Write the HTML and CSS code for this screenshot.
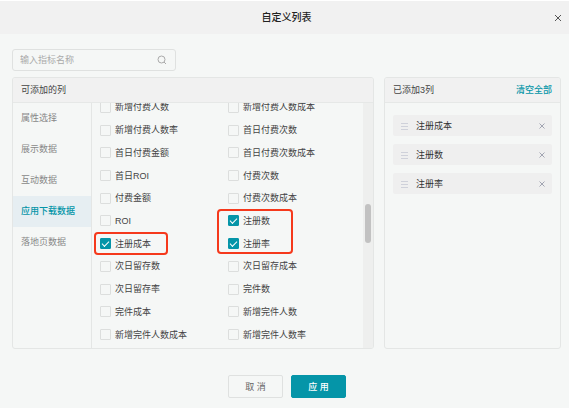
FILE: index.html
```html
<!DOCTYPE html>
<html lang="zh-CN">
<head>
  <meta charset="UTF-8" />
  <meta name="viewport" content="width=device-width, initial-scale=1.0" />
  <title>自定义列表</title>
  <link rel="stylesheet" href="styles.css">
</head>
<body>
  <div class="dialog">
    <header class="dialog-header">
      <h1>自定义列表</h1>
      <button type="button" class="close" aria-label="关闭">
        <svg viewBox="0 0 8 8" width="8" height="8"><path d="M1 1l6 6M7 1L1 7" /></svg>
      </button>
    </header>

    <main class="dialog-body">
      <div class="search">
        <input type="text" placeholder="输入指标名称" aria-label="输入指标名称">
        <svg viewBox="0 0 10 10" width="10" height="10"><circle cx="4.5" cy="4.5" r="3.5" /><path d="M7 7l2 2" /></svg>
      </div>

      <div class="panels">
        <section class="panel available">
          <h2 class="panel-title">可添加的列</h2>
          <div class="panel-content">
            <nav class="groups">
              <a href="#">属性选择</a>
              <a href="#">展示数据</a>
              <a href="#">互动数据</a>
              <a href="#" class="active">应用下载数据</a>
              <a href="#">落地页数据</a>
            </nav>

            <div class="list-view">
              <div class="list">
                <label><input type="checkbox">新增付费人数</label>
                <label><input type="checkbox">新增付费人数成本</label>
                <label><input type="checkbox">新增付费人数率</label>
                <label><input type="checkbox">首日付费次数</label>
                <label><input type="checkbox">首日付费金额</label>
                <label><input type="checkbox">首日付费次数成本</label>
                <label><input type="checkbox">首日ROI</label>
                <label><input type="checkbox">付费次数</label>
                <label><input type="checkbox">付费金额</label>
                <label><input type="checkbox">付费次数成本</label>
                <label><input type="checkbox">ROI</label>
                <label><input type="checkbox" checked>注册数</label>
                <label><input type="checkbox" checked>注册成本</label>
                <label><input type="checkbox" checked>注册率</label>
                <label><input type="checkbox">次日留存数</label>
                <label><input type="checkbox">次日留存成本</label>
                <label><input type="checkbox">次日留存率</label>
                <label><input type="checkbox">完件数</label>
                <label><input type="checkbox">完件成本</label>
                <label><input type="checkbox">新增完件人数</label>
                <label><input type="checkbox">新增完件人数成本</label>
                <label><input type="checkbox">新增完件人数率</label>
                <!-- 红框标注 -->
                <span class="mark mark-cost"></span>
                <span class="mark mark-count"></span>
              </div>
            </div>
            <div class="scrollbar"><div class="thumb"></div></div>
          </div>
        </section>

        <section class="panel selected">
          <div class="panel-title">
            <h2>已添加3列</h2>
            <button type="button" class="clear">清空全部</button>
          </div>
          <ul class="chips">
            <li>
              <svg class="handle" viewBox="0 0 8 8" width="8" height="8"><path d="M0 1.5h7M0 4.5h7M0 7.5h7" /></svg>
              <span>注册成本</span>
              <button type="button" aria-label="移除注册成本"><svg viewBox="0 0 8 8" width="8" height="8"><path d="M1.5 1.5l5 5M6.5 1.5l-5 5" /></svg></button>
            </li>
            <li>
              <svg class="handle" viewBox="0 0 8 8" width="8" height="8"><path d="M0 1.5h7M0 4.5h7M0 7.5h7" /></svg>
              <span>注册数</span>
              <button type="button" aria-label="移除注册数"><svg viewBox="0 0 8 8" width="8" height="8"><path d="M1.5 1.5l5 5M6.5 1.5l-5 5" /></svg></button>
            </li>
            <li>
              <svg class="handle" viewBox="0 0 8 8" width="8" height="8"><path d="M0 1.5h7M0 4.5h7M0 7.5h7" /></svg>
              <span>注册率</span>
              <button type="button" aria-label="移除注册率"><svg viewBox="0 0 8 8" width="8" height="8"><path d="M1.5 1.5l5 5M6.5 1.5l-5 5" /></svg></button>
            </li>
          </ul>
        </section>
      </div>
    </main>

    <footer class="dialog-footer">
      <button type="button" class="btn">取 消</button>
      <button type="button" class="btn primary">应 用</button>
    </footer>
  </div>
</body>
</html>
```
FILE: styles.css
```css
* {
  box-sizing: border-box;
}

body {
  margin: 0;
  background-color: #fff;
  color: #444;
  font-family: "Liberation Sans", "Noto Sans CJK SC", sans-serif;
  font-size: 9px;
  line-height: 14px;
}

h1,
h2,
ul {
  margin: 0;
  padding: 0;
  font-size: inherit;
  font-weight: normal;
  list-style: none;
}

button {
  padding: 0;
  border: 0;
  background: none;
  color: inherit;
  font: inherit;
  cursor: pointer;
}

svg {
  display: block;
  fill: none;
  stroke: #aaa;
}

.dialog {
  display: flex;
  flex-direction: column;
  min-height: 100vh;
  border-top: 1px solid #fff;
  background-color: #f5f7f6;
}

.dialog-header {
  display: grid;
  grid-template-columns: 1fr auto 1fr;
  align-items: center;
  height: 33px;
  padding: 0 7px 0 11px;
  background-color: #f1f1f1;
}

.dialog-header h1 {
  grid-column: 2;
  color: #222;
  font-size: 10px;
  font-weight: 500;
}

.close {
  justify-self: end;
}

.close svg {
  stroke: #555;
}

.dialog-body {
  display: flex;
  flex: 1;
  flex-direction: column;
  gap: 6px;
  padding: 15px 8px 0 12px;
}

.search {
  display: flex;
  align-items: center;
  width: 164px;
  height: 22px;
  padding: 0 8px 0 7px;
  border: 1px solid #dfe1e0;
  border-radius: 3px;
}

.search input {
  flex: 1;
  min-width: 0;
  padding: 0;
  border: 0;
  outline: 0;
  background: none;
  font: inherit;
}

.search input::placeholder {
  color: #aaa;
}

.panels {
  display: flex;
  flex: 1;
  gap: 10px;
}

.panel {
  display: flex;
  flex-direction: column;
  overflow: hidden;
  border: 1px solid #e4e6e5;
  border-radius: 3px;
}

.available {
  flex: 1;
}

.selected {
  width: 177px;
}

.panel-title {
  display: flex;
  align-items: center;
  justify-content: space-between;
  height: 25px;
  padding: 0 8px;
  border-bottom: 1px solid #e6e8e7;
  background-color: #f1f1f1;
}

.panel-content {
  display: flex;
  flex: 1;
}

.groups {
  width: 79px;
  border-right: 1px solid #e4e6e5;
}

.groups a {
  display: block;
  height: 31px;
  padding-left: 8px;
  color: #888;
  line-height: 31px;
  text-decoration: none;
}

.groups .active {
  background-color: #e6eef2;
  color: #0595a8;
  font-weight: 500;
}

.list-view {
  display: flex;
  flex: 1;
  flex-direction: column;
  justify-content: flex-end;
  height: 245px;
  padding: 0 0 2px 8px;
  overflow: hidden;
}

.list {
  display: grid;
  position: relative;
  flex: none;
  grid-template-columns: 128px 1fr;
  grid-auto-rows: 1fr;
  height: 250px;
}

.list label {
  display: flex;
  align-items: center;
  gap: 4px;
}

.list input {
  display: grid;
  place-items: center;
  width: 11px;
  height: 11px;
  margin: 0;
  border: 1px solid #dcdedd;
  border-radius: 1px;
  appearance: none;
}

.list input:checked {
  border-color: #0595a8;
  background-color: #0595a8;
}

.list input:checked::after {
  content: "";
  width: 6px;
  height: 3px;
  margin-bottom: 2px;
  border: solid #fff;
  border-width: 0 0 1px 1px;
  transform: rotate(-45deg);
}

.mark {
  position: absolute;
  border: 2px solid #f5391c;
  border-radius: 4px;
}

.mark-cost {
  top: 136px;
  left: -6px;
  width: 74px;
  height: 23px;
}

.mark-count {
  top: 113px;
  left: 117px;
  width: 76px;
  height: 45px;
}

.scrollbar {
  width: 10px;
  padding: 101px 1px 0 2px;
  background-color: #eeefee;
}

.thumb {
  width: 6px;
  height: 39px;
  border-radius: 3px;
  background-color: #c2c2c2;
}

.clear {
  color: #0595a8;
  font-weight: 500;
}

.chips {
  display: flex;
  flex-direction: column;
  gap: 8px;
  padding: 12px 8px;
}

.chips li {
  display: flex;
  align-items: center;
  gap: 7px;
  height: 21px;
  padding: 0 6px 0 8px;
  border-radius: 2px;
  background-color: #efefef;
  color: #333;
}

.chips span {
  flex: 1;
}

.chips svg {
  stroke: #a2a5b2;
}

.chips .handle {
  stroke: #cfd1da;
}

.dialog-footer {
  display: flex;
  justify-content: center;
  gap: 8px;
  padding: 26px 0 10px 5px;
}

.btn {
  width: 55px;
  height: 23px;
  border: 1px solid #dfe1e0;
  border-radius: 2px;
  color: #666;
}

.primary {
  border-color: #0595a8;
  background-color: #0595a8;
  color: #fff;
  font-weight: 500;
}
```
